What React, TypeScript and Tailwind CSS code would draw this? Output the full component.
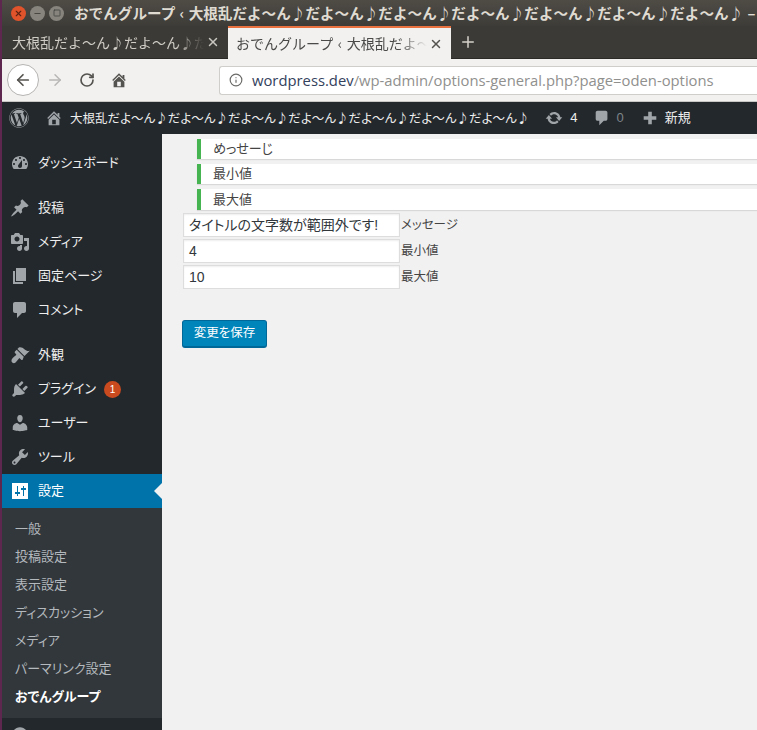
import { ArrowLeft, ArrowRight, RotateCw, Info, X, Minus, Square, Plus } from "lucide-react"
import { FaWordpress } from "react-icons/fa"

const TITLE = "大根乱だよ〜ん♪だよ〜ん♪だよ〜ん♪だよ〜ん♪だよ〜ん♪だよ〜ん♪だよ〜ん♪"

const icons = {
  dashboard:
    "M3.76 16h12.48c1.1-1.37 1.76-3.11 1.76-5 0-4.42-3.58-8-8-8s-8 3.58-8 8c0 1.89.66 3.63 1.76 5zM10 4c.55 0 1 .45 1 1s-.45 1-1 1-1-.45-1-1 .45-1 1-1zM6 6c.55 0 1 .45 1 1s-.45 1-1 1-1-.45-1-1 .45-1 1-1zm8 0c.55 0 1 .45 1 1s-.45 1-1 1-1-.45-1-1 .45-1 1-1zm-5.37 5.55L12 7v6c0 1.1-.9 2-2 2s-2-.9-2-2c0-.57.24-1.08.63-1.45zM4 10c.55 0 1 .45 1 1s-.45 1-1 1-1-.45-1-1 .45-1 1-1zm12 0c.55 0 1 .45 1 1s-.45 1-1 1-1-.45-1-1 .45-1 1-1z",
  post: "M10.44 3.02l1.82-1.82 6.36 6.35-1.83 1.82c-1.05-.68-2.48-.57-3.41.36l-.75.75c-.92.93-1.04 2.35-.35 3.41l-1.83 1.82-2.41-2.41-2.8 2.79c-.42.42-3.38 2.71-3.8 2.29s1.86-3.39 2.28-3.81l2.79-2.79L4.1 9.36l1.83-1.82c1.05.69 2.48.57 3.4-.36l.75-.75c.93-.92 1.05-2.35.36-3.41z",
  media:
    "M13 11V4c0-.55-.45-1-1-1h-1.67L9 1H5L3.67 3H2c-.55 0-1 .45-1 1v7c0 .55.45 1 1 1h10c.55 0 1-.45 1-1zM7 4.5c1.38 0 2.5 1.12 2.5 2.5S8.38 9.5 7 9.5 4.5 8.38 4.5 7 5.62 4.5 7 4.5zM14 6h5v10.5c0 1.38-1.12 2.5-2.5 2.5S14 17.88 14 16.5s1.12-2.5 2.5-2.5c.17 0 .34.02.5.05V9h-3V6zm-4 8.05V13h2v3.5c0 1.38-1.12 2.5-2.5 2.5S7 17.88 7 16.5 8.12 14 9.5 14c.17 0 .34.02.5.05z",
  page: "M6 15V2h10v13H6zm-1 1h8v2H3V5h2v11z",
  comment: "M5 2h9c1.1 0 2 .9 2 2v7c0 1.1-.9 2-2 2h-2l-5 5v-5H5c-1.1 0-2-.9-2-2V4c0-1.1.9-2 2-2z",
  appearance:
    "M14.48 11.06L7.41 3.99l1.5-1.5c.5-.56 2.3-.47 3.51.32 1.21.8 1.43 1.28 2.91 2.1 1.18.64 2.45 1.26 4.45.85zm-.71.71L6.7 4.7 4.93 6.47c-.39.39-.39 1.02 0 1.41l1.06 1.06c.39.39.39 1.03 0 1.42-.6.6-1.43 1.11-2.21 1.69-.35.26-.7.53-1.01.84-1.34 1.34-1.81 3.28-.56 4.53s3.19.78 4.01-.56c.3-.3.58-.66.84-1.01.58-.78 1.09-1.61 1.69-2.21.39-.39 1.02-.39 1.41 0l1.06 1.06c.39.39 1.02.39 1.41 0z",
  plugin:
    "M13.11 4.36L9.87 7.6 8 5.73l3.24-3.24c.35-.34 1.05-.2 1.56.32.52.51.66 1.21.31 1.55zm-8 1.77l.91-1.12 9.01 9.01-1.19.84c-.71.71-2.63 1.16-3.82 1.16H6.14L4.9 17.26c-.59.59-1.54.59-2.12 0-.59-.58-.59-1.53 0-2.12l1.24-1.24v-3.88c0-1.13.4-3.19 1.09-3.89zm7.26 3.97l3.24-3.24c.34-.35 1.04-.21 1.55.31.52.51.66 1.21.31 1.55l-3.24 3.25z",
  users:
    "M10 9.25c-2.27 0-2.73-3.44-2.73-3.44C7 4.02 7.82 2 9.97 2c2.16 0 2.98 2.02 2.71 3.81 0 0-.41 3.44-2.68 3.44zm0 2.57L12.72 10c2.39 0 4.52 2.33 4.52 4.53v2.49s-3.65 1.13-7.24 1.13c-3.65 0-7.24-1.13-7.24-1.13v-2.49c0-2.25 1.94-4.48 4.47-4.48z",
  tools:
    "M16.68 9.77c-1.34 1.34-3.3 1.67-4.95.99l-5.41 6.52c-.99.99-2.59.99-3.58 0s-.99-2.59 0-3.57l6.52-5.42c-.68-1.65-.35-3.61.99-4.95 1.28-1.28 3.12-1.62 4.72-1.06l-2.89 2.89 2.82 2.82 2.86-2.87c.53 1.58.18 3.39-1.08 4.65zM3.81 16.21c.4.39 1.04.39 1.43 0 .4-.4.4-1.04 0-1.43-.39-.4-1.03-.4-1.43 0-.39.39-.39 1.03 0 1.43z",
  settings:
    "M2 2h16v16H2zM7 5v6H5v2h2v2h1v-2h2v-2H8V5zM13 5v2h-2v2h2v6h1V9h2V7h-2V5z",
  home: "M16 8.5l1.53 1.53-1.06 1.06L10 4.62l-6.47 6.47-1.06-1.06L10 2.5l4 4v-2h2v4zm-6-2.46l6 5.99V18H4v-5.97zM12 17v-5H8v5h4z",
  update:
    "M10.2 3.28c3.53 0 6.43 2.61 6.92 6h2.08l-3.5 4-3.5-4h2.32c-.45-1.97-2.21-3.45-4.32-3.45-1.45 0-2.73.71-3.54 1.78L4.95 5.66C6.23 4.2 8.11 3.28 10.2 3.28zm-.4 13.44c-3.52 0-6.43-2.61-6.92-6H.8l3.5-4c1.17 1.33 2.33 2.67 3.5 4H5.48c.45 1.97 2.21 3.45 4.32 3.45 1.45 0 2.73-.71 3.54-1.78l1.71 1.95c-1.28 1.46-3.15 2.38-5.25 2.38z",
  plus: "M17 8v4h-5v5H8v-5H3V8h5V3h4v5h5z",
  collapse: "M10 2.16c4.33 0 7.84 3.51 7.84 7.84s-3.51 7.84-7.84 7.84S2.16 14.33 2.16 10 5.67 2.16 10 2.16zM11 6l-4 4 4 4V6z",
}

function Dashicon({ d, className }: { d: string; className?: string }) {
  return (
    <svg viewBox="0 0 20 20" fill="currentColor" fillRule="evenodd" className={className}>
      <path d={d} />
    </svg>
  )
}

function MenuItem({ icon, label, badge }: { icon: string; label?: string; badge?: string }) {
  return (
    <div className="h-[34px] flex items-center text-[#eeeeee] text-[13px]">
      <Dashicon d={icon} className="w-5 h-5 ml-[8px] text-[#a0a5aa] shrink-0" />
      {label && <span className="ml-[8px]">{label}</span>}
      {badge && (
        <span className="ml-[8px] w-[17px] h-[17px] rounded-full bg-[#ca4a1f] text-white text-[10px] flex items-center justify-center">
          {badge}
        </span>
      )}
    </div>
  )
}

function Notice({ text, tall }: { text: string; tall?: boolean }) {
  return (
    <div
      className={`ml-[35px] border-l-4 border-[#46b450] bg-white pl-3 flex items-center text-[13px] text-[#444444] shadow-[0_1px_1px_rgba(0,0,0,0.1)] ${
        tall ? "h-[21px]" : "h-5"
      }`}
    >
      {text}
    </div>
  )
}

function Field({ value, label }: { value: string; label: string }) {
  return (
    <div className="flex items-center h-6 ml-[21px]">
      <div className="w-[217px] h-6 bg-white border border-[#dddddd] shadow-[inset_0_1px_2px_rgba(0,0,0,0.07)] pl-[5px] flex items-center text-[14px] text-[#32373c]">
        {value}
      </div>
      <span className="ml-[1px] text-[12.5px] text-[#444444]">{label}</span>
    </div>
  )
}

export default function App() {
  return (
    <div className="w-[757px] h-[730px] overflow-hidden flex bg-[#f1f1f1] font-['Liberation_Sans','Noto_Sans_CJK_JP',sans-serif]">
      <div className="w-[2px] shrink-0 bg-[#5e2750]" />
      <div className="flex-1 min-w-0 flex flex-col">
        {/* window title */}
        <div className="h-[26px] shrink-0 flex items-center bg-linear-to-b from-[#4f4c46] to-[#3e3c38] overflow-hidden font-['Noto_Sans_CJK_JP',sans-serif]">
          <div className="ml-[9px] w-[15px] h-[15px] rounded-full bg-[#e0532b] flex items-center justify-center shrink-0">
            <X className="w-[9px] h-[9px] text-[#5c2413]" strokeWidth={3} />
          </div>
          <div className="ml-[4px] w-[15px] h-[15px] rounded-full bg-[#86847d] flex items-center justify-center shrink-0">
            <Minus className="w-[9px] h-[9px] text-[#45433e]" strokeWidth={2.5} />
          </div>
          <div className="ml-[4px] w-[15px] h-[15px] rounded-full bg-[#86847d] flex items-center justify-center shrink-0">
            <Square className="w-[8px] h-[8px] text-[#45433e]" strokeWidth={2.5} />
          </div>
          <span className="ml-[10px] text-[14.6px] font-bold text-[#dfdbd2] whitespace-nowrap [word-spacing:1px]">
            おでんグループ ‹ {TITLE} –
          </span>
        </div>

        {/* tabs */}
        <div className="h-[33px] shrink-0 flex bg-[#3c3a36] border-b border-[#2b2a27] font-['Noto_Sans_CJK_JP',sans-serif]">
          <div className="w-[226px] shrink-0 flex items-center pl-[10px] pr-[8px] text-[14px] text-[#cfccc5]">
            <span className="flex-1 min-w-0 overflow-hidden whitespace-nowrap [mask-image:linear-gradient(to_right,black_85%,transparent)]">
              {TITLE}
            </span>
            <X className="w-[14px] h-[14px] ml-[2px] text-[#c9c6bf] shrink-0" strokeWidth={2.5} />
          </div>
          <div className="w-[223px] shrink-0 h-[33px] flex items-center pl-[8px] pr-[8px] bg-[#f2f1f0] border-t-2 border-[#e9703f] text-[14px] text-[#4a4a48]">
            <span className="flex-1 min-w-0 overflow-hidden whitespace-nowrap [word-spacing:1.5px] [mask-image:linear-gradient(to_right,black_85%,transparent)]">
              おでんグループ ‹ {TITLE}
            </span>
            <X className="w-[14px] h-[14px] ml-[2px] text-[#55534f] shrink-0" strokeWidth={2.5} />
          </div>
          <Plus className="w-[18px] h-[18px] ml-[8px] mt-[7px] text-[#d5d2cb]" strokeWidth={2} />
        </div>

        {/* nav bar */}
        <div className="h-[43px] shrink-0 flex items-center bg-[#f2f1f0] border-b border-[#c8c7c5]">
          <div className="ml-[5px] w-8 h-8 rounded-full bg-white border border-[#b5b4b2] flex items-center justify-center shrink-0">
            <ArrowLeft className="w-[18px] h-[18px] text-[#55534f]" strokeWidth={2.25} />
          </div>
          <ArrowRight className="ml-[7px] w-[18px] h-[18px] text-[#b8b7b5] shrink-0" strokeWidth={2} />
          <RotateCw className="ml-[15px] w-[16px] h-[16px] text-[#55534f] shrink-0" strokeWidth={2.5} />
          <Dashicon d={icons.home} className="ml-[15px] w-[18px] h-[18px] text-[#55534f] shrink-0" />
          <div className="ml-[91px] flex-1 h-[29px] flex items-center bg-white border border-[#cfcecb] rounded-l-[3px] border-r-0">
            <Info className="ml-[9px] w-[14px] h-[14px] text-[#6a6a68] shrink-0" strokeWidth={2} />
            <span className="ml-[9px] text-[14.8px] whitespace-nowrap text-[#90908e] font-['Open_Sans',sans-serif]">
              <span className="text-[#33415c]">wordpress.dev</span>/wp-admin/options-general.php?page=oden-options
            </span>
          </div>
        </div>

        {/* admin bar */}
        <div className="h-8 shrink-0 flex items-center bg-[#23282d] text-[#eeeeee] text-[13px]">
          <FaWordpress className="ml-[7px] w-5 h-5 text-[#a0a5aa] shrink-0" />
          <Dashicon d={icons.home} className="ml-[16px] w-[18px] h-[18px] text-[#a0a5aa] shrink-0" />
          <span className="ml-[7px] text-[12.5px] whitespace-nowrap font-['Noto_Sans_CJK_JP',sans-serif] [font-feature-settings:'palt']">
            {TITLE}
          </span>
          <Dashicon d={icons.update} className="ml-[16px] w-[18px] h-[18px] text-[#a0a5aa] shrink-0" />
          <span className="ml-[7px]">4</span>
          <Dashicon d={icons.comment} className="ml-[15px] w-[18px] h-[18px] text-[#a0a5aa] shrink-0" />
          <span className="ml-[6px] text-[#7e8489]">0</span>
          <Dashicon d={icons.plus} className="ml-[17px] w-[18px] h-[18px] text-[#a0a5aa] shrink-0" />
          <span className="ml-[6px]">新規</span>
        </div>

        <div className="flex-1 min-h-0 flex [font-feature-settings:'palt']">
          {/* sidebar */}
          <div className="w-[160px] shrink-0 bg-[#23282d] pt-3">
            <MenuItem icon={icons.dashboard} label="ダッシュボード" />
            <div className="h-[11px]" />
            <MenuItem icon={icons.post} label="投稿" />
            <MenuItem icon={icons.media} label="メディア" />
            <MenuItem icon={icons.page} label="固定ページ" />
            <MenuItem icon={icons.comment} label="コメント" />
            <div className="h-[11px]" />
            <MenuItem icon={icons.appearance} label="外観" />
            <MenuItem icon={icons.plugin} label="プラグイン" badge="1" />
            <MenuItem icon={icons.users} label="ユーザー" />
            <MenuItem icon={icons.tools} label="ツール" />
            <div className="relative h-[34px] flex items-center bg-[#0073aa] text-white text-[13px]">
              <Dashicon d={icons.settings} className="w-5 h-5 ml-[8px] text-white shrink-0" />
              <span className="ml-[8px]">設定</span>
              <div className="absolute right-0 top-[9px] border-y-8 border-r-8 border-y-transparent border-r-[#f1f1f1]" />
            </div>
            <div className="bg-[#32373c] py-[7px] text-[13px] text-[#b4b9be]">
              {["一般", "投稿設定", "表示設定", "ディスカッション", "メディア", "パーマリンク設定"].map((s) => (
                <div key={s} className="h-7 flex items-center pl-[13px]">
                  {s}
                </div>
              ))}
              <div className="h-7 flex items-center pl-[13px] font-bold text-white">おでんグループ</div>
            </div>
            <MenuItem icon={icons.collapse} />
          </div>

          {/* content */}
          <div className="flex-1 min-w-0 pt-[5px]">
            <div className="flex flex-col gap-[5px]">
              <Notice text="めっせーじ" />
              <Notice text="最小値" />
              <Notice text="最大値" tall />
            </div>
            <div className="flex flex-col gap-[2px] mt-[3px]">
              <Field value="タイトルの文字数が範囲外です!" label="メッセージ" />
              <Field value="4" label="最小値" />
              <Field value="10" label="最大値" />
            </div>
            <button className="mt-[31px] ml-[20px] w-[85px] h-[28px] rounded-[3px] bg-[#0085ba] border border-[#006799] border-b-2 text-white text-[12.5px] flex items-center justify-center">
              変更を保存
            </button>
          </div>
        </div>
      </div>
    </div>
  )
}
